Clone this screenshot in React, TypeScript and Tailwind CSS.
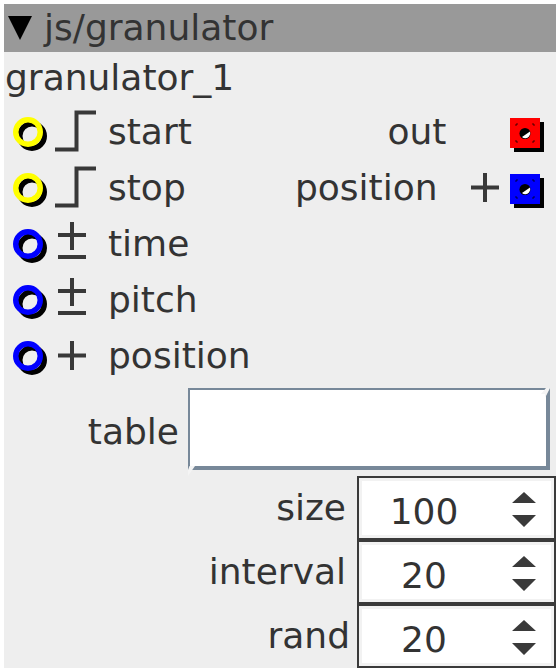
const Font = { fontFamily: '"DejaVu Sans", sans-serif' };

function Ring({ color }: { color: string }) {
  return (
    <svg width="36" height="36" viewBox="0 0 36 36" className="mt-[6px] shrink-0">
      <circle cx="19" cy="19" r="12.25" fill="none" stroke="#000" strokeWidth="5.5" />
      <circle cx="15" cy="15" r="12.25" fill="none" stroke={color} strokeWidth="5.5" />
    </svg>
  );
}

function Square({ color }: { color: string }) {
  return (
    <svg width="36" height="36" viewBox="0 0 36 36" className="mt-[5px] shrink-0">
      <rect x="5" y="5" width="30" height="30" fill="#000" />
      <rect x="1" y="1" width="30" height="30" fill={color} />
      <path d="M7 9V7H9M23 7H25V9M25 23V25H23M9 25H7V23" fill="none" stroke="#000" strokeWidth="1" opacity="0.7" />
      <circle cx="16" cy="16.5" r="5.5" fill="#000" />
      <path d="M13 20a5 5 0 0 0 7-.5a5 5 0 0 0 1-5z" fill="#fff" />
    </svg>
  );
}

function Step() {
  return (
    <svg width="44" height="44" viewBox="0 0 44 44" className="ml-[5px] shrink-0">
      <path d="M1 39.5H22.5V2.5H42" fill="none" stroke="#383838" strokeWidth="4" />
    </svg>
  );
}

function Plus({ className }: { className?: string }) {
  return (
    <svg width="32" height="32" viewBox="0 0 32 32" className={`shrink-0 ${className ?? ""}`}>
      <path d="M16 1V30M2 15.5H30" fill="none" stroke="#383838" strokeWidth="4" />
    </svg>
  );
}

function PlusMinus() {
  return (
    <svg width="32" height="44" viewBox="0 0 32 44" className="ml-[7px] shrink-0">
      <path d="M16 0V28M2 13H30M2 35H30" fill="none" stroke="#383838" strokeWidth="4" />
    </svg>
  );
}

function InputRow({ color, icon, label }: { color: string; icon: React.ReactNode; label: string }) {
  return (
    <div className="flex h-14 items-center pl-[9px]">
      <Ring color={color} />
      <div className="flex w-[59px] justify-start">{icon}</div>
      <span>{label}</span>
    </div>
  );
}

function Spinner({ label, value, gap }: { label: string; value: string; gap: string }) {
  return (
    <div className="flex h-16 items-center justify-end">
      <span className={gap}>{label}</span>
      <div className="h-16 w-[199px] border-2 border-[#3a3a3a] bg-[#f2f2f2] p-[3px]">
        <div className="flex h-full w-full items-center bg-white">
          <span className="w-[124px] pt-[8px] text-center">{value}</span>
          <svg width="26" height="40" viewBox="0 0 26 40" className="ml-auto mr-[14px] mt-[6px] shrink-0">
            <path d="M13 1L25 12H1zM1 24H25L13 36z" fill="#3a3a3a" />
          </svg>
        </div>
      </div>
    </div>
  );
}

export default function App() {
  return (
    <div className="h-[672px] w-[560px] bg-white p-1 text-[36px] leading-none text-[#333333]" style={Font}>
      <div className="h-[664px] w-[552px] bg-[#eeeeee]">
        <div className="flex h-12 items-center bg-[#999999] pl-[3px]">
          <svg width="28" height="28" viewBox="0 0 28 28" className="mr-[9px] shrink-0">
            <path d="M1 2H25L13 26z" fill="#000" />
          </svg>
          <span>js/granulator</span>
        </div>
        <div className="flex h-[52px] items-center pl-[1px]">granulator_1</div>
        <div className="relative">
          <InputRow color="#ffff00" icon={<Step />} label="start" />
          <InputRow color="#ffff00" icon={<Step />} label="stop" />
          <InputRow color="#0000ff" icon={<PlusMinus />} label="time" />
          <InputRow color="#0000ff" icon={<PlusMinus />} label="pitch" />
          <InputRow color="#0000ff" icon={<Plus className="ml-[7px]" />} label="position" />
          <div className="absolute right-[11.5px] top-0">
            <div className="flex h-14 items-center justify-end">
              <span className="mr-[62px]">out</span>
              <Square color="#ff0000" />
            </div>
            <div className="flex h-14 items-center justify-end">
              <span className="mr-[31px]">position</span>
              <Plus />
              <span className="w-[8px]" />
              <Square color="#0000ff" />
            </div>
          </div>
        </div>
        <div className="mt-[4px] flex h-[88px] items-start justify-end pr-[6px]">
          <span className="mr-[9px] mt-[26px]">table</span>
          <div className="relative h-[82px] w-[362px] border-2 border-b-4 border-r-4 border-[#778899] bg-white">
            <svg width="10" height="10" viewBox="0 0 10 10" className="absolute right-[-4px] top-[-2px]">
              <path d="M10 0H6L1 6H5V10z" fill="#f4f4f4" />
            </svg>
            <svg width="10" height="10" viewBox="0 0 10 10" className="absolute bottom-[-10px] left-[-2px]">
              <path d="M0 10L7 0H5V-4H3L0 4z" fill="#f4f4f4" />
            </svg>
          </div>
        </div>
        <div>
          <Spinner label="size" value="100" gap="mr-[11px]" />
          <Spinner label="interval" value="20" gap="mr-[11px]" />
          <Spinner label="rand" value="20" gap="mr-[7px]" />
        </div>
      </div>
    </div>
  );
}
